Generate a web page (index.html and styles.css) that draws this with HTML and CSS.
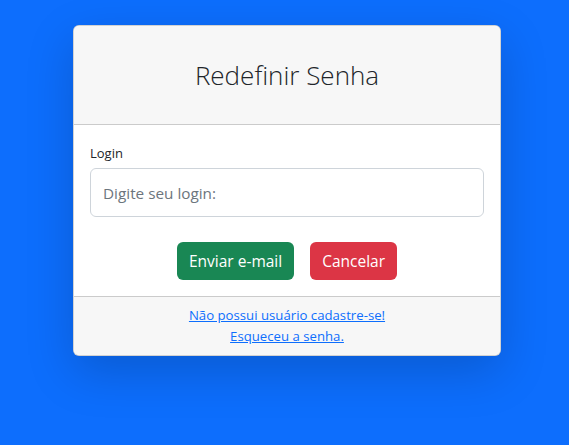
FILE: index.html
```html
<!DOCTYPE html>
<html lang="pt-BR">
<head>
<meta charset="utf-8">
<title>Redefinir Senha</title>
<link rel="stylesheet" href="styles.css">
</head>
<body>
<main class="page">
  <section class="card">
    <header class="card-header">
      <h2 class="title">Redefinir Senha</h2>
    </header>
    <form class="card-body">
      <div class="field">
        <label class="label" for="login">Login</label>
        <input class="input" id="login" type="text" placeholder="Digite seu login:">
      </div>
      <div class="actions">
        <button type="button" class="btn btn-success">Enviar e-mail</button>
        <button type="button" class="btn btn-danger">Cancelar</button>
      </div>
    </form>
    <footer class="card-footer">
      <a href="#" class="link">Não possui usuário cadastre-se!</a>
      <a href="#" class="link">Esqueceu a senha.</a>
    </footer>
  </section>
</main>
</body>
</html>
```
FILE: styles.css
```css
* { box-sizing: border-box; }
html, body { margin: 0; height: 100%; }
body {
  background: #0d6efd;
  font-family: "Open Sans", "Noto Sans", sans-serif;
  color: #212529;
}
.page {
  display: flex;
  justify-content: center;
  padding: 25px 0 0 5px;
}
.card {
  width: 428px;
  background: #fff;
  border: 1px solid rgba(0,0,0,.175);
  border-radius: 6px;
  box-shadow: 0 16px 48px rgba(0,0,0,.175);
  overflow: hidden;
}
.card-header {
  background: #f7f7f7;
  border-bottom: 1px solid rgba(0,0,0,.175);
  padding: 30px 16px;
  text-align: center;
}
.title {
  margin: 0;
  font-weight: 300;
  font-size: 26px;
  line-height: 38px;
}
.card-body {
  padding: 18px 16px 16px;
  display: flex;
  flex-direction: column;
  gap: 25px;
}
.field { display: flex; flex-direction: column; gap: 4px; }
.label { font-size: 13px; line-height: 21px; }
.input {
  height: 49px;
  border: 1px solid #ced4da;
  border-radius: 6px;
  padding: 0 12px;
  font: inherit;
  font-size: 15.3px;
  color: #212529;
}
.input::placeholder { color: #6c757d; }
.actions { display: flex; justify-content: center; gap: 16px; }
.btn {
  height: 38px;
  border: 0;
  border-radius: 6px;
  padding: 0 12px;
  font: inherit;
  font-size: 15.5px;
  color: #fff;
}
.btn-success { background: #198754; }
.btn-danger { background: #dc3545; }
.card-footer {
  background: #f7f7f7;
  border-top: 1px solid rgba(0,0,0,.175);
  padding: 8px 16px;
  display: flex;
  flex-direction: column;
  align-items: center;
}
.link {
  color: #0d6efd;
  font-size: 13.2px;
  line-height: 21px;
}
```
